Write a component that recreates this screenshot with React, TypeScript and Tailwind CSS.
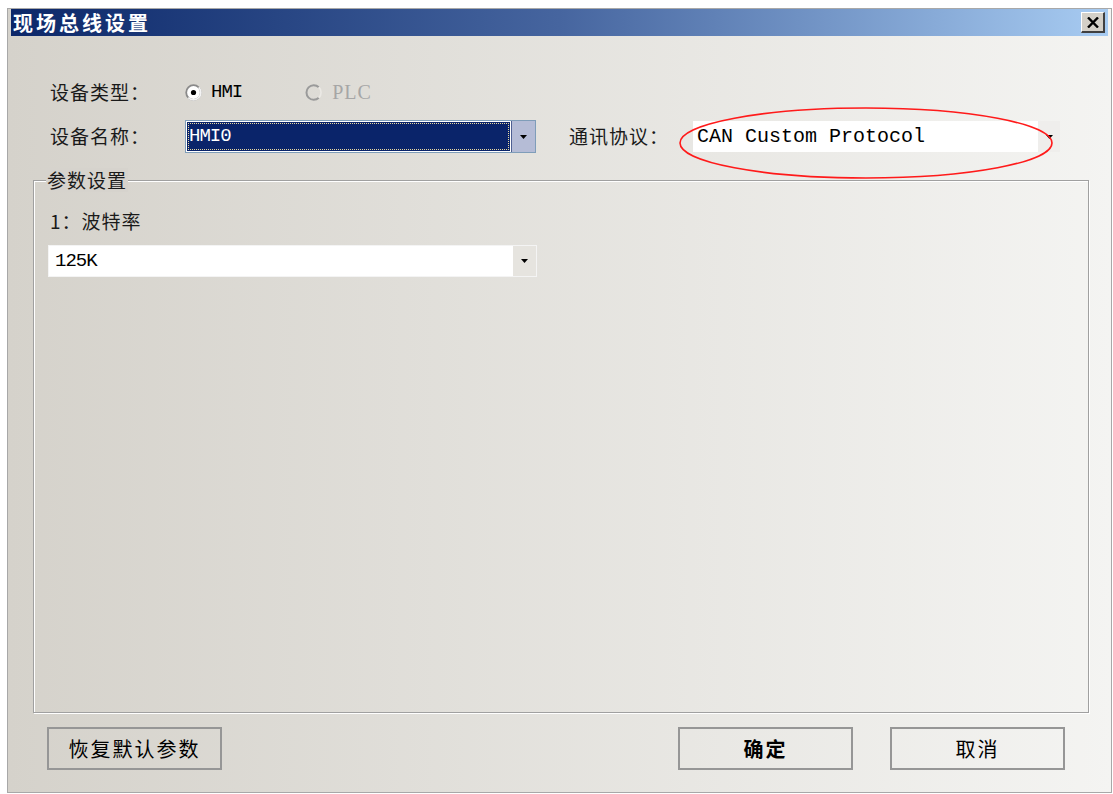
import React from "react";

const cjk = "font-['Noto_Sans_CJK_SC',sans-serif]";
const mono = "font-['Liberation_Mono','Noto_Sans_CJK_SC',monospace]";

function Arrow() {
  return (
    <svg width="9" height="6" viewBox="0 0 9 6">
      <path d="M1 1 H8 L4.5 5 Z" fill="#000" />
    </svg>
  );
}

function Radio({ checked, disabled }: { checked?: boolean; disabled?: boolean }) {
  return (
    <svg width="19" height="19" viewBox="0 0 19 19">
      {disabled ? (
        <>
          <path d="M14.8 4.2 A7.3 7.3 0 1 0 14.8 14.8" fill="none" stroke="#9a9a9a" strokeWidth="2" />
          <path d="M14.8 14.8 A7.3 7.3 0 0 0 14.8 4.2" fill="none" stroke="#ebe9e5" strokeWidth="1.6" />
        </>
      ) : (
        <>
          <circle cx="9.5" cy="9.5" r="7.3" fill="#fff" stroke="#8a8a8a" strokeWidth="1.8" />
          <path d="M4.3 14.7 A7.3 7.3 0 0 0 14.7 4.3" fill="none" stroke="#f4f4f4" strokeWidth="1.8" />
          {checked && <circle cx="9.5" cy="9.5" r="2.6" fill="#000" />}
        </>
      )}
    </svg>
  );
}

function Button({ label, bold }: { label: string; bold?: boolean }) {
  return (
    <div
      className={`w-[175px] h-[43px] border-2 border-[#969696] flex items-center justify-center text-[20px] tracking-[2px] text-black ${cjk} ${
        bold ? "font-bold" : ""
      }`}
    >
      {label}
    </div>
  );
}

export default function App() {
  return (
    <div className="w-[1113px] h-[794px] bg-white pl-[7px] pt-[8px] overflow-hidden">
      <div className="relative w-[1105px] h-[785px] border border-[#a8a8a8] flex flex-col bg-gradient-to-r from-[#d5d2cb] to-[#f4f4f2]">
        {/* title bar */}
        <div className="mx-[3px] h-[27px] flex items-center justify-between bg-gradient-to-r from-[#0c2769] via-[#46659f] to-[#a8ccf2] pl-[2px] pr-[3px]">
          <span className={`text-white font-bold text-[20px] tracking-[3px] leading-none ${cjk}`}>现场总线设置</span>
          <div className="w-[24px] h-[21px] bg-[#d4d0c8] border-t border-l border-white border-r-2 border-b-2 border-r-[#404040] border-b-[#404040] flex items-center justify-center">
            <svg width="12" height="11" viewBox="0 0 12 11">
              <path d="M1 0.5 L11 10.5 M11 0.5 L1 10.5" stroke="#000" strokeWidth="2.4" />
            </svg>
          </div>
        </div>

        {/* device type */}
        <div className={`mt-[41px] h-[30px] ml-[42px] flex items-center text-[19px] tracking-[1px] text-[#1a1a1a] ${cjk}`}>
          <span className="w-[134px]">设备类型：</span>
          <span className="flex items-center">
            <Radio checked />
            <span className={`ml-[8px] text-[19px] text-black ${mono} tracking-[-1px]`}>HMI</span>
          </span>
          <span className="flex items-center ml-[62px]">
            <Radio disabled />
            <span className="ml-[9px] text-[20px] text-[#a6a6a6] font-['Liberation_Serif',serif]">PLC</span>
          </span>
        </div>

        {/* device name + protocol */}
        <div className={`mt-[13px] h-[33px] ml-[42px] flex items-center text-[19px] tracking-[1px] text-[#1a1a1a] ${cjk}`}>
          <span className="w-[135px]">设备名称：</span>
          <div className="w-[351px] h-[33px] border border-[#7f9db9] flex bg-white">
            <div className="flex-1 m-[1px] bg-[#0a246a] outline-1 outline-dotted outline-[#e8d8a0] -outline-offset-2 flex items-center pl-[2px]">
              <span className={`text-white text-[19px] tracking-[-1px] ${mono}`}>HMI0</span>
            </div>
            <div className="w-[24px] bg-[#b5bcd6] border-l border-[#4e5f92] flex items-center justify-center">
              <Arrow />
            </div>
          </div>
          <span className="ml-[33px] w-[124px]">通讯协议：</span>
          <div className="w-[367px] h-[31px] flex bg-white">
            <div className="flex-1 flex items-center pl-[4px]">
              <span className={`text-[20px] tracking-[0px] text-black ${mono}`}>CAN Custom Protocol</span>
            </div>
            <div className="w-[22px] bg-[#efeeec] flex items-center justify-center">
              <Arrow />
            </div>
          </div>
        </div>

        {/* parameter group */}
        <div className="relative mt-[27px] ml-[25px] w-[1056px] h-[533px] border border-[#a0a0a0] shadow-[inset_1px_1px_0_#ffffff,1px_1px_0_#ffffff] flex flex-col">
          <span className={`absolute left-[12px] -top-[13px] px-[1px] bg-[#d6d3cd] text-[19px] tracking-[1px] leading-[24px] text-[#1a1a1a] ${cjk}`}>
            参数设置
          </span>
          <span className={`mt-[28px] ml-[16px] h-[24px] leading-[24px] text-[19px] tracking-[1px] text-[#1a1a1a] ${cjk}`}>
            1：波特率
          </span>
          <div className="mt-[12px] ml-[14px] w-[489px] h-[32px] flex bg-white border border-[#f4f4f4]">
            <div className="flex-1 flex items-center pl-[6px]">
              <span className={`text-[19px] tracking-[-1px] text-black ${mono}`}>125K</span>
            </div>
            <div className="w-[23px] bg-[#e6e4df] flex items-center justify-center">
              <Arrow />
            </div>
          </div>
        </div>

        {/* buttons */}
        <div className="mt-[14px] ml-[39px] flex">
          <Button label="恢复默认参数" />
          <div className="ml-[456px]">
            <Button label="确定" bold />
          </div>
          <div className="ml-[37px]">
            <Button label="取消" />
          </div>
        </div>

        {/* highlight ring around the protocol field */}
        <svg className="absolute left-0 top-0 pointer-events-none" width="1105" height="785">
          <ellipse cx="858" cy="134" rx="186" ry="35" fill="none" stroke="#ff1a1a" strokeWidth="1.6" />
        </svg>
      </div>
    </div>
  );
}
